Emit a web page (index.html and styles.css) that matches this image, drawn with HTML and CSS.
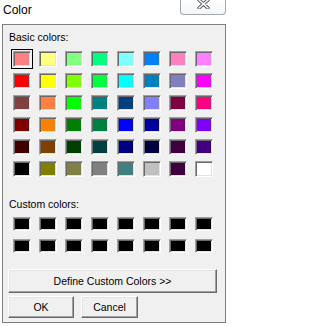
FILE: index.html
```html
<!DOCTYPE html>
<html>
<head>
<meta charset="utf-8">
<title>Color</title>
<link rel="stylesheet" href="styles.css">
</head>
<body>
<div class="titlebar">
  <div class="title">Color</div>
  <div class="close">
    <svg width="13" height="10" viewBox="0 0 13 10">
      <path d="M2 1 L11 9 M11 1 L2 9" stroke="#5a5f68" stroke-width="3.4" stroke-linecap="round" fill="none"/>
      <path d="M2 1 L11 9 M11 1 L2 9" stroke="#ffffff" stroke-width="1.4" stroke-linecap="round" fill="none"/>
    </svg>
  </div>
</div>
<div class="panel">
  <div class="label label-basic">Basic colors:</div>
  <div class="grid basic">
    <div class="sw selected" style="background:#ff8080"></div>
    <div class="sw" style="background:#ffff80"></div>
    <div class="sw" style="background:#80ff80"></div>
    <div class="sw" style="background:#00ff80"></div>
    <div class="sw" style="background:#80ffff"></div>
    <div class="sw" style="background:#0080ff"></div>
    <div class="sw" style="background:#ff80c0"></div>
    <div class="sw" style="background:#ff80ff"></div>

    <div class="sw" style="background:#ff0000"></div>
    <div class="sw" style="background:#ffff00"></div>
    <div class="sw" style="background:#80ff00"></div>
    <div class="sw" style="background:#00ff40"></div>
    <div class="sw" style="background:#00ffff"></div>
    <div class="sw" style="background:#0080c0"></div>
    <div class="sw" style="background:#8080c0"></div>
    <div class="sw" style="background:#ff00ff"></div>

    <div class="sw" style="background:#804040"></div>
    <div class="sw" style="background:#ff8040"></div>
    <div class="sw" style="background:#00ff00"></div>
    <div class="sw" style="background:#008080"></div>
    <div class="sw" style="background:#004080"></div>
    <div class="sw" style="background:#8080ff"></div>
    <div class="sw" style="background:#800040"></div>
    <div class="sw" style="background:#ff0080"></div>

    <div class="sw" style="background:#800000"></div>
    <div class="sw" style="background:#ff8000"></div>
    <div class="sw" style="background:#008000"></div>
    <div class="sw" style="background:#008040"></div>
    <div class="sw" style="background:#0000ff"></div>
    <div class="sw" style="background:#0000a0"></div>
    <div class="sw" style="background:#800080"></div>
    <div class="sw" style="background:#8000ff"></div>

    <div class="sw" style="background:#400000"></div>
    <div class="sw" style="background:#804000"></div>
    <div class="sw" style="background:#004000"></div>
    <div class="sw" style="background:#004040"></div>
    <div class="sw" style="background:#000080"></div>
    <div class="sw" style="background:#000040"></div>
    <div class="sw" style="background:#400040"></div>
    <div class="sw" style="background:#400080"></div>

    <div class="sw" style="background:#000000"></div>
    <div class="sw" style="background:#808000"></div>
    <div class="sw" style="background:#808040"></div>
    <div class="sw" style="background:#808080"></div>
    <div class="sw" style="background:#408080"></div>
    <div class="sw" style="background:#c0c0c0"></div>
    <div class="sw" style="background:#400040"></div>
    <div class="sw" style="background:#ffffff"></div>
  </div>
  <div class="label label-custom">Custom colors:</div>
  <div class="grid custom">
    <div class="sw"></div><div class="sw"></div><div class="sw"></div><div class="sw"></div>
    <div class="sw"></div><div class="sw"></div><div class="sw"></div><div class="sw"></div>
    <div class="sw"></div><div class="sw"></div><div class="sw"></div><div class="sw"></div>
    <div class="sw"></div><div class="sw"></div><div class="sw"></div><div class="sw"></div>
  </div>
  <div class="btn define">Define Custom Colors &gt;&gt;</div>
  <div class="btnrow">
    <div class="btn ok">OK</div>
    <div class="btn cancel">Cancel</div>
  </div>
</div>
</body>
</html>
```
FILE: styles.css
```css
html, body {
  margin: 0;
  padding: 0;
  background: #ffffff;
}
body {
  width: 228px;
  height: 327px;
  overflow: hidden;
  font-family: "Liberation Sans", Arial, sans-serif;
  color: #000;
}
.titlebar {
  display: flex;
  justify-content: space-between;
  align-items: flex-start;
  height: 24px;
}
.title {
  padding: 3px 0 0 3px;
  font-size: 12px;
  line-height: 15px;
}
.close {
  box-sizing: border-box;
  width: 46px;
  height: 15px;
  margin-right: 2px;
  border: 1px solid #a3a7ae;
  border-top: none;
  border-radius: 0 0 4px 4px;
  background: linear-gradient(#ffffff, #f4f5f7);
  display: flex;
  justify-content: center;
  align-items: flex-start;
  padding-left: 1px;
}
.close svg {
  display: block;
  margin-top: -1px;
}
.panel {
  box-sizing: border-box;
  margin-left: 2px;
  width: 224px;
  height: 299px;
  border: 1px solid #7f7f7f;
  background: #f0f0f0;
  display: flex;
  flex-direction: column;
  align-items: flex-start;
}
.label {
  font-size: 10.5px;
  line-height: 12px;
  padding-left: 6px;
}
.label-basic {
  margin-top: 6px;
}
.label-custom {
  margin-top: 21px;
}
.grid {
  display: grid;
  grid-template-columns: repeat(8, 18px);
  column-gap: 8px;
  margin-left: 10px;
}
.basic {
  margin-top: 8px;
  grid-auto-rows: 16px;
  row-gap: 6px;
}
.custom {
  margin-top: 7px;
  grid-auto-rows: 14px;
  row-gap: 8px;
}
.sw {
  box-sizing: border-box;
  border: 1px solid;
  border-color: #a0a0a0 #ffffff #ffffff #a0a0a0;
  box-shadow: inset 1px 1px #696969, inset -1px -1px #e3e3e3;
  background: #000000;
}
.selected {
  outline: 1px solid #000;
  outline-offset: 1px;
}
.btn {
  box-sizing: border-box;
  background: #f0f0f0;
  border: 1px solid;
  border-color: #ffffff #696969 #696969 #ffffff;
  box-shadow: inset -1px -1px #a0a0a0, inset 1px 1px #e3e3e3;
  font-size: 10.5px;
  display: flex;
  align-items: center;
  justify-content: center;
}
.define {
  margin-top: 16px;
  margin-left: 5px;
  width: 209px;
  height: 24px;
}
.btnrow {
  display: flex;
  gap: 7px;
  margin-top: 3px;
  margin-left: 5px;
}
.ok {
  width: 66px;
  height: 22px;
}
.cancel {
  width: 57px;
  height: 22px;
}
```
